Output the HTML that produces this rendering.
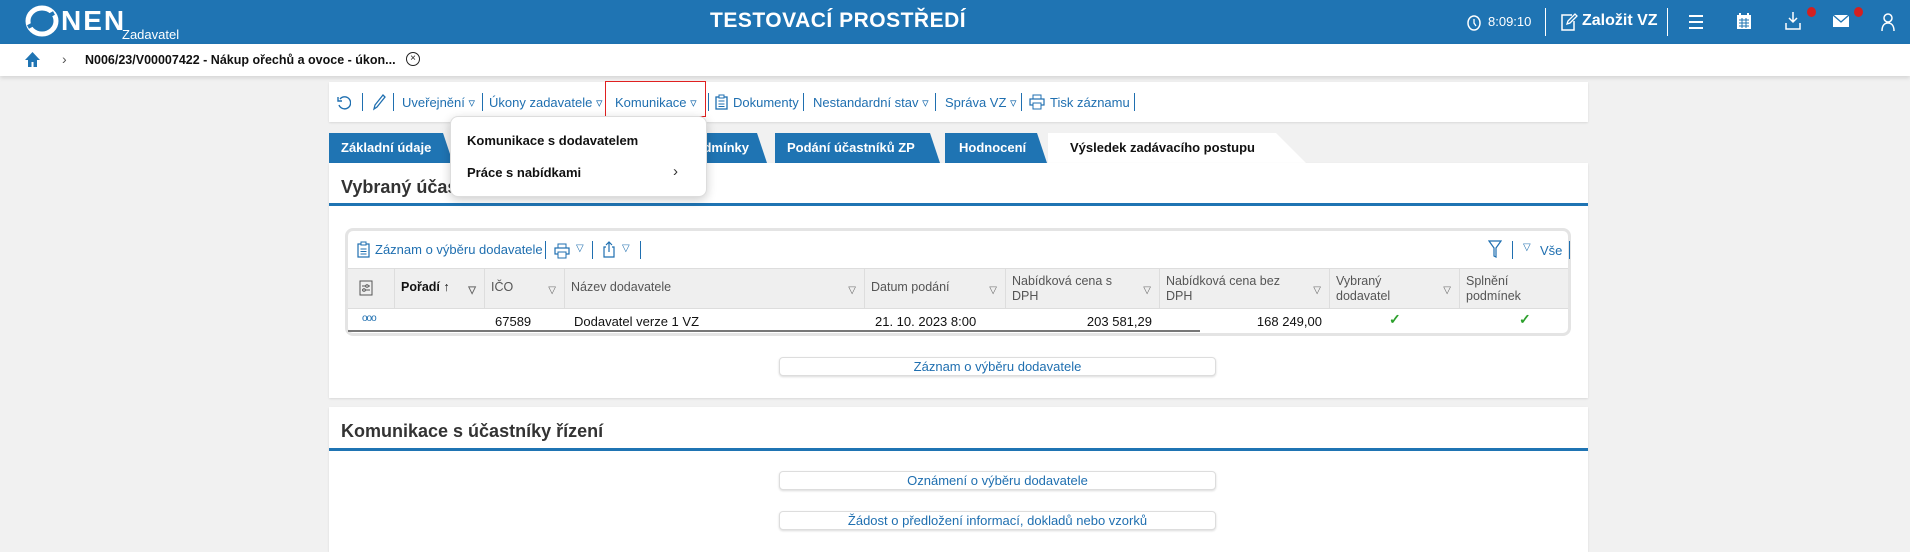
<!DOCTYPE html>
<html><head><meta charset="utf-8">
<style>
*{box-sizing:border-box;margin:0;padding:0}
body{width:1910px;height:552px;overflow:hidden;background:#f1f1f1;font-family:"Liberation Sans",sans-serif;position:relative;color:#222}
.a{position:absolute;white-space:nowrap}
.hdr{position:absolute;left:0;top:0;width:1910px;height:44px;background:#1f74b3}
.crumb{position:absolute;left:0;top:44px;width:1910px;height:32px;background:#fff;box-shadow:0 2px 4px rgba(0,0,0,.12)}
.w{color:#fff}
.blue{color:#1f6fb0}
.tb{font-size:13px;color:#1f6fb0;top:95px}
.sep{position:absolute;width:1px;background:#1f6fb0}
.panel{position:absolute;background:#fff;box-shadow:0 1px 2px rgba(0,0,0,.1)}
.tab{position:absolute;top:133px;height:30px;background:#1f74b3;color:#fff;font-weight:bold;font-size:13px;line-height:30px;clip-path:polygon(0 0,calc(100% - 10px) 0,100% 100%,0 100%)}
.th{position:absolute;top:269px;height:39px;background:#efefef;border-right:1px solid #ddd;font-size:12.5px;color:#555;padding:5px 6px;line-height:15px}
.th .f{position:absolute;right:8px;top:14px;font-size:10px;color:#666}
.btn{position:absolute;left:779px;width:437px;height:19px;border:1px solid #ddd;border-radius:4px;box-shadow:0 1px 2px rgba(0,0,0,.15);background:#fff;text-align:center;font-size:13px;line-height:17px;color:#1f6fb0}
.td{position:absolute;top:314px;font-size:13px;color:#111}
</style></head><body>
<div class="hdr"></div>
<svg class="a" style="left:24px;top:5px" width="36" height="32" viewBox="0 0 36 32"><ellipse cx="18" cy="16" rx="14" ry="13" fill="none" stroke="#fff" stroke-width="5"/><path d="M4 22 L30 8" stroke="#1f74b3" stroke-width="4"/></svg>
<div class="a w" style="left:61px;top:5px;font-size:28px;font-weight:bold;letter-spacing:2px">NEN</div>
<div class="a w" style="left:122px;top:27px;font-size:13px">Zadavatel</div>
<div class="a w" style="left:710px;top:9px;font-size:21px;font-weight:bold;letter-spacing:.5px">TESTOVACÍ PROSTŘEDÍ</div>
<svg class="a" style="left:1466px;top:14px" width="16" height="18"><ellipse cx="8" cy="9" rx="6" ry="7" fill="none" stroke="#fff" stroke-width="1.5"/><path d="M8 5v4l2 3" stroke="#fff" fill="none" stroke-width="1.3"/></svg>
<div class="a w" style="left:1488px;top:14px;font-size:13px">8:09:10</div>
<div class="sep" style="left:1545px;top:8px;height:28px;background:#fff"></div>
<svg class="a" style="left:1560px;top:12px" width="18" height="20"><path d="M12 3H2v15h12V9" fill="none" stroke="#fff" stroke-width="1.5"/><path d="M7 12l1-3 7-7 2 2-7 7z" fill="none" stroke="#fff" stroke-width="1.3"/></svg>
<div class="a w" style="left:1582px;top:12px;font-size:16px;font-weight:bold">Založit VZ</div>
<div class="sep" style="left:1667px;top:8px;height:28px;background:#fff"></div>
<svg class="a" style="left:1688px;top:14px" width="16" height="16"><path d="M1 2h14M1 8h14M1 14h14" stroke="#fff" stroke-width="2"/></svg>
<svg class="a" style="left:1736px;top:12px" width="16" height="18"><rect x="1" y="3" width="14" height="14" fill="#fff"/><path d="M4 1v4M12 1v4" stroke="#fff" stroke-width="2"/><path d="M3 8h10M3 11h10M3 14h10M6 6v10M10 6v10" stroke="#1f74b3" stroke-width="1"/></svg>
<svg class="a" style="left:1784px;top:11px" width="18" height="20"><path d="M9 1v10M5 7l4 4 4-4M2 12v6h14v-6" fill="none" stroke="#fff" stroke-width="1.5"/></svg>
<div class="a" style="left:1807px;top:7px;width:9px;height:10px;border-radius:50%;background:#d32020"></div>
<svg class="a" style="left:1832px;top:14px" width="18" height="14"><rect x="1" y="1" width="16" height="12" fill="#fff"/><path d="M1 1l8 7 8-7" fill="none" stroke="#1f74b3" stroke-width="1.3"/></svg>
<div class="a" style="left:1854px;top:7px;width:9px;height:10px;border-radius:50%;background:#d32020"></div>
<svg class="a" style="left:1880px;top:12px" width="16" height="20"><circle cx="8" cy="6" r="4" fill="none" stroke="#fff" stroke-width="1.5"/><path d="M2 19c0-6 3-8 6-8s6 2 6 8" fill="none" stroke="#fff" stroke-width="1.5"/></svg>

<div class="crumb"></div>
<svg class="a" style="left:24px;top:51px" width="17" height="17"><path d="M8.5 1L1 9h3v7h3.5v-5h2v5H13V9h3z" fill="#1f74b3"/></svg>
<div class="a" style="left:62px;top:51px;font-size:14px;color:#555">&#8250;</div>
<div class="a" style="left:85px;top:53px;font-size:12.5px;font-weight:bold;color:#111">N006/23/V00007422 - Nákup ořechů a ovoce - úkon...</div>
<div class="a" style="left:406px;top:52px;width:14px;height:14px;border:1.5px solid #222;border-radius:50%;font-size:10px;line-height:11px;text-align:center">×</div>

<div class="panel" style="left:329px;top:82px;width:1259px;height:40px"></div>
<svg class="a" style="left:337px;top:95px" width="14" height="15"><path d="M3 4a6 6 0 1 1 -1 6" fill="none" stroke="#1f6fb0" stroke-width="1.4"/><path d="M1 2v4h4" fill="none" stroke="#1f6fb0" stroke-width="1.4"/></svg>
<div class="sep" style="left:362px;top:93px;height:18px"></div>
<svg class="a" style="left:371px;top:93px" width="15" height="18"><path d="M3 16l1-4 8-10 2 2-8 10z" fill="none" stroke="#1f6fb0" stroke-width="1.3"/></svg>
<div class="sep" style="left:393px;top:93px;height:18px"></div>
<div class="a tb" style="left:402px">Uveřejnění ▿</div>
<div class="sep" style="left:482px;top:93px;height:18px"></div>
<div class="a tb" style="left:489px">Úkony zadavatele ▿</div>
<div class="sep" style="left:605px;top:93px;height:18px"></div>
<div class="a tb" style="left:615px">Komunikace ▿</div>
<div class="a" style="left:605px;top:81px;width:101px;height:36px;border:1px solid #e02020"></div>
<div class="sep" style="left:708px;top:93px;height:18px"></div>
<svg class="a" style="left:715px;top:94px" width="13" height="16"><rect x="1" y="3" width="11" height="12" fill="none" stroke="#1f6fb0" stroke-width="1.3"/><rect x="4" y="1" width="5" height="3" fill="#fff" stroke="#1f6fb0"/><path d="M3.5 7h6M3.5 10h6M3.5 12.5h6" stroke="#1f6fb0"/></svg>
<div class="a tb" style="left:733px">Dokumenty</div>
<div class="sep" style="left:803px;top:93px;height:18px"></div>
<div class="a tb" style="left:813px">Nestandardní stav ▿</div>
<div class="sep" style="left:935px;top:93px;height:18px"></div>
<div class="a tb" style="left:945px">Správa VZ ▿</div>
<div class="sep" style="left:1021px;top:93px;height:18px"></div>
<svg class="a" style="left:1029px;top:94px" width="16" height="16"><rect x="4" y="1" width="8" height="4" fill="none" stroke="#1f6fb0"/><rect x="1" y="5" width="14" height="6" fill="none" stroke="#1f6fb0" stroke-width="1.2"/><rect x="4" y="9" width="8" height="6" fill="#fff" stroke="#1f6fb0"/></svg>
<div class="a tb" style="left:1050px">Tisk záznamu</div>
<div class="sep" style="left:1134px;top:93px;height:18px"></div>

<div class="tab" style="left:329px;width:124px;padding-left:12px">Základní údaje</div>
<div class="tab" style="left:455px;width:312px;padding-left:12px;text-align:right;padding-right:18px">Zadávací podmínky</div>
<div class="tab" style="left:775px;width:165px;padding-left:12px">Podání účastníků ZP</div>
<div class="tab" style="left:945px;width:102px;padding-left:14px">Hodnocení</div>
<div class="tab" style="left:1048px;width:258px;background:#fff;color:#111;padding-left:22px;clip-path:polygon(0 0,228px 0,100% 100%,0 100%)">Výsledek zadávacího postupu</div>

<div class="panel" style="left:329px;top:163px;width:1259px;height:235px"></div>
<div class="a" style="left:341px;top:177px;font-size:18px;font-weight:bold;color:#333">Vybraný účastník</div>
<div class="a" style="left:329px;top:203px;width:1259px;height:3px;background:#1f74b3"></div>

<div class="a" style="left:345px;top:228px;width:1226px;height:108px;border:3px solid #e4e4e4;border-radius:8px;background:#fff"></div>
<svg class="a" style="left:357px;top:241px" width="13" height="17"><rect x="1" y="3" width="11" height="13" fill="none" stroke="#1f6fb0" stroke-width="1.2"/><rect x="4" y="1" width="5" height="3" fill="#fff" stroke="#1f6fb0"/><path d="M3.5 8h6M3.5 10.5h6M3.5 13h6" stroke="#1f6fb0"/></svg>
<div class="a" style="left:375px;top:242px;font-size:13px;color:#1f6fb0">Záznam o výběru dodavatele</div>
<div class="sep" style="left:545px;top:241px;height:18px"></div>
<svg class="a" style="left:554px;top:243px" width="16" height="16"><rect x="4" y="1" width="8" height="4" fill="none" stroke="#1f6fb0"/><rect x="1" y="5" width="14" height="6" fill="none" stroke="#1f6fb0" stroke-width="1.2"/><rect x="4" y="9" width="8" height="6" fill="#fff" stroke="#1f6fb0"/></svg>
<div class="a" style="left:576px;top:243px;font-size:10px;color:#1f6fb0">▽</div>
<div class="sep" style="left:592px;top:241px;height:18px"></div>
<svg class="a" style="left:602px;top:240px" width="14" height="18"><path d="M4 7H2v10h10V7h-2M7 12V2M4 5l3-3 3 3" fill="none" stroke="#1f6fb0" stroke-width="1.2"/></svg>
<div class="a" style="left:622px;top:243px;font-size:10px;color:#1f6fb0">▽</div>
<div class="sep" style="left:640px;top:241px;height:18px"></div>
<svg class="a" style="left:1488px;top:240px" width="14" height="18"><path d="M1 1h12L8 8v9L6 16V8z" fill="none" stroke="#1f6fb0" stroke-width="1.2"/></svg>
<div class="sep" style="left:1512px;top:241px;height:18px"></div>
<div class="a" style="left:1523px;top:242px;font-size:10px;color:#1f6fb0">▽</div>
<div class="a" style="left:1540px;top:243px;font-size:13px;color:#1f6fb0">Vše</div>
<div class="sep" style="left:1569px;top:241px;height:18px"></div>

<div class="a" style="left:348px;top:268px;width:1220px;height:1px;background:#ddd"></div>
<div class="th" style="left:348px;width:47px"><svg style="position:absolute;left:11px;top:11px" width="14" height="16"><rect x="1" y="1" width="12" height="14" fill="none" stroke="#555"/><path d="M3 6h8M3 10h8" stroke="#555"/><circle cx="8" cy="6" r="1.3" fill="#fff" stroke="#555"/><circle cx="5" cy="10" r="1.3" fill="#fff" stroke="#555"/></svg></div>
<div class="th" style="left:395px;width:90px;color:#111;font-weight:bold;padding-top:11px">Pořadí <span style="font-weight:normal">↑</span><span class="f">▽</span></div>
<div class="th" style="left:485px;width:80px;padding-top:11px">IČO<span class="f">▽</span></div>
<div class="th" style="left:565px;width:300px;padding-top:11px">Název dodavatele<span class="f">▽</span></div>
<div class="th" style="left:865px;width:141px;padding-top:11px">Datum podání<span class="f">▽</span></div>
<div class="th" style="left:1006px;width:154px">Nabídková cena s<br>DPH<span class="f">▽</span></div>
<div class="th" style="left:1160px;width:170px">Nabídková cena bez<br>DPH<span class="f">▽</span></div>
<div class="th" style="left:1330px;width:130px">Vybraný<br>dodavatel<span class="f">▽</span></div>
<div class="th" style="left:1460px;width:108px;border-right:none">Splnění<br>podmínek</div>
<div class="a" style="left:348px;top:308px;width:1220px;height:1px;background:#ddd"></div>
<div class="a" style="left:362px;top:313px;font-size:10px;color:#1f6fb0;letter-spacing:-1px">ooo</div>
<div class="td" style="left:495px">67589</div>
<div class="td" style="left:574px">Dodavatel verze 1 VZ</div>
<div class="td" style="left:875px">21. 10. 2023 8:00</div>
<div class="td" style="left:1006px;width:146px;text-align:right">203 581,29</div>
<div class="td" style="left:1160px;width:162px;text-align:right">168 249,00</div>
<div class="a" style="left:1389px;top:311px;color:#2ca02c;font-size:14px;font-weight:bold">✓</div>
<div class="a" style="left:1519px;top:311px;color:#2ca02c;font-size:14px;font-weight:bold">✓</div>
<div class="a" style="left:348px;top:330px;width:852px;height:2px;background:#777"></div>

<div class="btn" style="top:357px">Záznam o výběru dodavatele</div>

<div class="panel" style="left:329px;top:407px;width:1259px;height:145px"></div>
<div class="a" style="left:341px;top:421px;font-size:18px;font-weight:bold;color:#333">Komunikace s účastníky řízení</div>
<div class="a" style="left:329px;top:448px;width:1259px;height:3px;background:#1f74b3"></div>
<div class="btn" style="top:471px">Oznámení o výběru dodavatele</div>
<div class="btn" style="top:511px">Žádost o předložení informací, dokladů nebo vzorků</div>

<div class="a" style="left:450px;top:116px;width:257px;height:81px;background:#fff;border:1px solid #ddd;border-radius:8px;box-shadow:0 3px 10px rgba(0,0,0,.2)"></div>
<div class="a" style="left:467px;top:133px;font-size:13px;font-weight:bold;color:#111">Komunikace s dodavatelem</div>
<div class="a" style="left:467px;top:165px;font-size:13px;font-weight:bold;color:#111">Práce s nabídkami</div>
<div class="a" style="left:673px;top:163px;font-size:15px;color:#333">&#8250;</div>
</body></html>
